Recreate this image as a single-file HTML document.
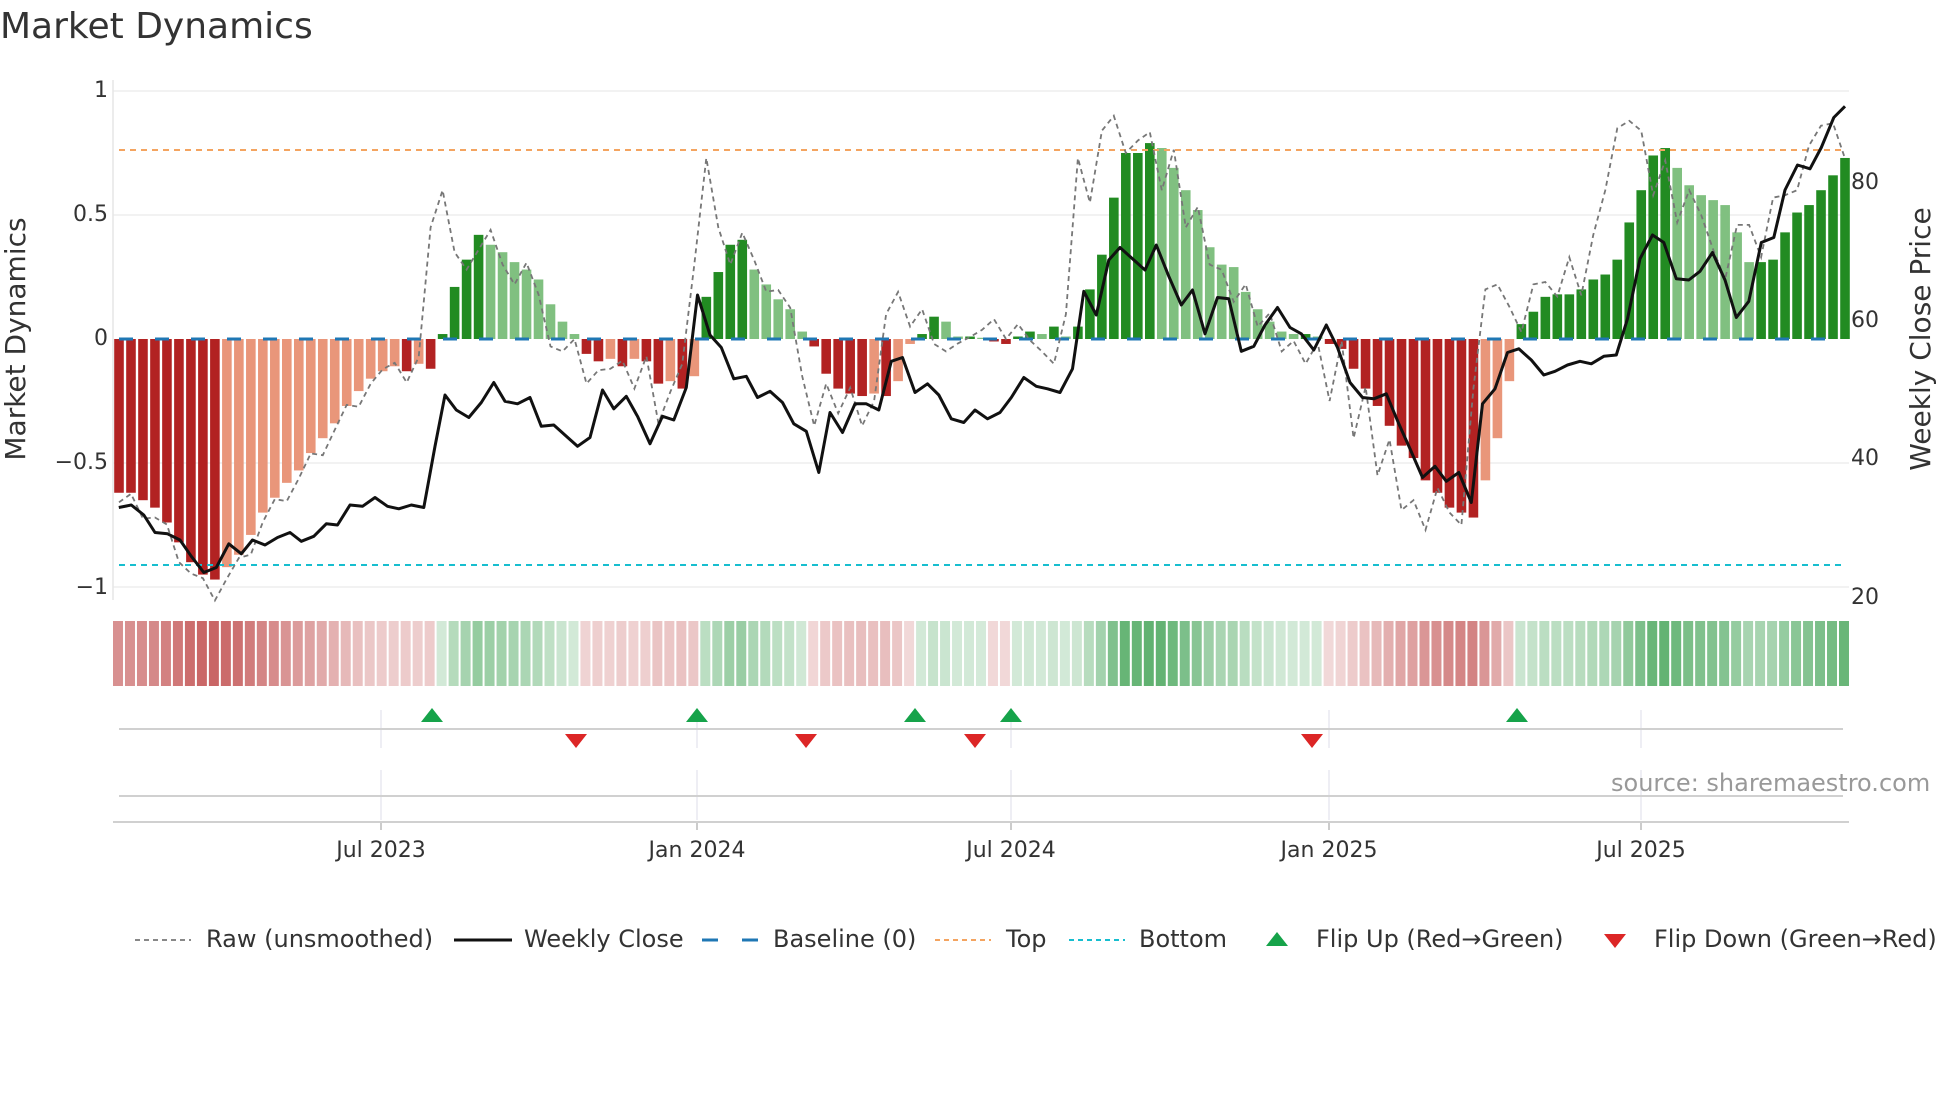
<!DOCTYPE html>
<html><head><meta charset="utf-8">
<style>
html,body{margin:0;padding:0;background:#fff;}
body{width:1960px;height:1102px;overflow:hidden;position:relative;font-family:"DejaVu Sans","Liberation Sans",sans-serif;color:#333;}
.t{position:absolute;white-space:nowrap;}
</style></head><body>
<div class="t" style="left:0;top:6px;font-size:36px;color:#333;">Market Dynamics</div>
<svg id="s" width="1960" height="1102" style="position:absolute;left:0;top:0">
</svg>
<div class="t" style="left:92px;top:78px;font-size:22px;width:16px;text-align:right">1</div>
<div class="t" style="left:60px;top:202px;font-size:22px;width:48px;text-align:right">0.5</div>
<div class="t" style="left:60px;top:326px;font-size:22px;width:48px;text-align:right">0</div>
<div class="t" style="left:40px;top:450px;font-size:22px;width:68px;text-align:right">−0.5</div>
<div class="t" style="left:40px;top:575px;font-size:22px;width:68px;text-align:right">−1</div>
<div class="t" style="left:1851px;top:170px;font-size:22px">80</div>
<div class="t" style="left:1851px;top:308px;font-size:22px">60</div>
<div class="t" style="left:1851px;top:446px;font-size:22px">40</div>
<div class="t" style="left:1851px;top:585px;font-size:22px">20</div>
<div class="t" style="left:-134px;top:322px;font-size:28px;width:300px;height:34px;line-height:34px;text-align:center;transform:rotate(-90deg)">Market Dynamics</div>
<div class="t" style="left:1771px;top:322px;font-size:28px;width:300px;height:34px;line-height:34px;text-align:center;transform:rotate(-90deg)">Weekly Close Price</div>
<div class="t" style="left:1611px;top:769px;font-size:24px;color:#999">source: sharemaestro.com</div>
<div class="t" style="left:321px;top:838px;font-size:22px;width:120px;text-align:center">Jul 2023</div>
<div class="t" style="left:637px;top:838px;font-size:22px;width:120px;text-align:center">Jan 2024</div>
<div class="t" style="left:951px;top:838px;font-size:22px;width:120px;text-align:center">Jul 2024</div>
<div class="t" style="left:1269px;top:838px;font-size:22px;width:120px;text-align:center">Jan 2025</div>
<div class="t" style="left:1581px;top:838px;font-size:22px;width:120px;text-align:center">Jul 2025</div>
<div class="t" style="left:206px;top:925px;font-size:24px">Raw (unsmoothed)</div>
<div class="t" style="left:524px;top:925px;font-size:24px">Weekly Close</div>
<div class="t" style="left:773px;top:925px;font-size:24px">Baseline (0)</div>
<div class="t" style="left:1006px;top:925px;font-size:24px">Top</div>
<div class="t" style="left:1139px;top:925px;font-size:24px">Bottom</div>
<div class="t" style="left:1316px;top:925px;font-size:24px">Flip Up (Red→Green)</div>
<div class="t" style="left:1654px;top:925px;font-size:24px">Flip Down (Green→Red)</div>
<script>
var NS="http://www.w3.org/2000/svg",S=document.getElementById('s');
function el(t,a){var e=document.createElementNS(NS,t);for(var k in a)e.setAttribute(k,a[k]);S.appendChild(e);return e;}
var V=[-0.62,-0.62,-0.65,-0.68,-0.74,-0.82,-0.9,-0.95,-0.97,
-0.92,-0.87,-0.79,-0.7,-0.64,-0.58,-0.53,-0.46,-0.4,-0.34,-0.27,-0.21,-0.16,-0.13,-0.11,
-0.13,-0.1,-0.12,
0.02,0.21,0.32,0.42,0.38,0.35,0.31,0.28,0.24,0.14,0.07,0.02,
-0.06,-0.09,-0.08,-0.11,-0.08,-0.09,-0.18,-0.17,-0.2,-0.15,
0.17,0.27,0.38,0.4,0.28,0.22,0.16,0.12,0.03,
-0.03,-0.14,-0.2,-0.22,-0.23,-0.22,-0.23,-0.17,-0.02,
0.02,0.09,0.07,0.01,0.01,0.005,-0.01,-0.02,
0.01,0.03,0.02,0.05,0.01,0.05,0.2,0.34,0.57,0.75,0.75,0.79,0.77,0.69,0.6,0.52,0.37,0.3,0.29,0.19,0.12,0.07,0.03,0.02,0.02,0.01,
-0.02,-0.04,-0.12,-0.2,-0.27,-0.35,-0.43,-0.48,-0.57,-0.62,-0.68,-0.7,-0.72,-0.57,-0.4,-0.17,
0.06,0.11,0.17,0.18,0.18,0.2,0.24,0.26,0.32,0.47,0.6,0.74,0.77,0.69,0.62,0.58,0.56,0.54,0.43,0.31,0.31,0.32,0.43,0.51,0.54,0.6,0.66,0.73];
var n=V.length,x0=119,x1=1845,dx=(x1-x0)/(n-1);
function Y(v){return 339-v*248;}
[1,0.5,-0.5,-1].forEach(function(v){el('line',{x1:113,x2:1849,y1:Y(v),y2:Y(v),stroke:'#eeeeee','stroke-width':1.5});});
el('line',{x1:113,x2:113,y1:80,y2:600,stroke:'#e6e6e6','stroke-width':1.5});
for(var i=0;i<n;i++){var v=V[i],p=i?V[i-1]:0;var dark=(i==0)||(Math.abs(v)>=Math.abs(p)&&v*p>0)||(v*p<=0);
 var c=v<0?(dark?'#b22222':'#e9967a'):(dark?'#228b22':'#80c080');
 var y=Y(v),h=Math.abs(v)*248;el('rect',{x:x0+i*dx-4.8,y:v<0?339:y,width:9.6,height:Math.max(h,1),fill:c});
 var a=Math.min(1,Math.abs(v));var col;
 if(v<0){var t=0.2+0.65*a;col='rgba(190,70,70,'+t.toFixed(2)+')';}else{var t=0.22+0.75*a;col='rgba(60,160,80,'+t.toFixed(2)+')';}
 el('rect',{x:x0+i*dx-6,y:621,width:dx-2,height:65,fill:col});
}
el('line',{x1:119,x2:1845,y1:339,y2:339,stroke:'#1f77b4','stroke-width':3,'stroke-dasharray':'14 22'});
el('line',{x1:119,x2:1845,y1:150,y2:150,stroke:'#f4a460','stroke-width':2,'stroke-dasharray':'6 5'});
el('line',{x1:119,x2:1845,y1:565,y2:565,stroke:'#17becf','stroke-width':2,'stroke-dasharray':'6 5'});
var pk={29:0.45,30:0.6,31:0.35,32:0.28,33:0.36,34:0.44,35:0.3,36:0.22,38:0.18,39:-0.03,40:-0.05,42:-0.18,44:-0.12,46:-0.2,48:-0.34,50:-0.1,51:0.3,52:0.73,53:0.45,54:0.3,60:-0.15,61:-0.35,62:-0.18,63:-0.3,65:-0.35,66:-0.25,67:0.1,68:0.19,69:0.05,70:0.12,71:-0.02,72:-0.05,76:0.08,78:0.06,80:-0.05,81:-0.1,82:0.1,83:0.73,84:0.55,85:0.84,86:0.9,87:0.75,88:0.8,90:0.6,92:0.45,94:0.3,96:0.15,98:0.05,100:-0.05,102:-0.1,104:-0.25,106:-0.4,108:-0.55,110:-0.69,111:-0.65,112:-0.77,113:-0.6,114:-0.7,115:-0.75,116:-0.2,117:0.2,118:0.22,119:0.13,121:0.22,122:0.23,124:0.33,126:0.42,127:0.6,128:0.85,129:0.88,130:0.84,131:0.58,132:0.72,133:0.47,134:0.6,135:0.5,136:0.36,137:0.24,138:0.46,139:0.46,140:0.33,141:0.57,142:0.58,143:0.6,144:0.78,145:0.86,146:0.87};
var d='';for(var i=0;i<n;i++){var j=i>=23?i+3:i;var r=(j in pk)?pk[j]:(V[i]*1.05+0.04*Math.sin(i*2.3));if(i<23)r=V[i]*1.03+0.04*Math.sin(i*2.1)-0.02;d+=(i?'L':'M')+(x0+i*dx).toFixed(1)+' '+Y(r).toFixed(1);}
el('path',{d:d,fill:'none',stroke:'#777','stroke-width':1.8,'stroke-dasharray':'5 4'});
var P=[95,406,105,404,115,412,124,426,134,427,144,432,153,445,163,458,173,454,183,435,193,443,202,432,212,436,222,430,232,426,241,433,251,429,261,419,270,420,280,404,290,405,300,398,310,405,319,407,329,404,339,406,348,357,356,316,365,328,375,334,385,322,395,306,404,321,414,323,424,318,433,341,443,340,453,349,462,357,472,350,482,312,491,327,501,317,510,333,520,355,530,333,539,336,549,310,558,236,568,268,577,278,587,303,597,301,606,318,616,313,626,322,635,339,645,345,655,378,664,330,674,346,684,323,693,323,703,328,713,289,722,286,732,314,742,307,751,316,761,335,771,338,780,328,790,335,800,330,809,318,819,302,829,309,838,311,848,314,858,295,867,233,877,252,887,208,896,198,906,207,916,216,925,196,935,221,945,244,954,232,964,267,974,238,983,239,993,281,1003,277,1012,260,1022,246,1032,262,1041,267,1051,280,1061,260,1070,278,1080,306,1090,318,1099,319,1109,315,1119,339,1128,359,1138,382,1148,373,1157,385,1167,378,1177,402,1186,323,1196,311,1206,282,1215,279,1225,288,1235,300,1244,297,1254,292,1264,289,1273,291,1283,285,1293,284,1302,255,1312,207,1322,188,1331,194,1341,223,1351,224,1360,217,1370,202,1380,224,1389,254,1399,241,1409,194,1419,190,1428,152,1438,132,1448,135,1457,118,1467,94,1476,85];
d='';for(var i=0;i<P.length;i+=2)d+=(i?'L':'M')+(P[i]*1.25).toFixed(1)+' '+(P[i+1]*1.25).toFixed(1);
el('path',{d:d,fill:'none',stroke:'#111','stroke-width':3,'stroke-linejoin':'round'});
[381,697,1011,1329,1641].forEach(function(x){el('line',{x1:x,x2:x,y1:710,y2:748,stroke:'#e8e8f0','stroke-width':1.5});el('line',{x1:x,x2:x,y1:770,y2:820,stroke:'#e8e8f0','stroke-width':1.5});el('line',{x1:x,x2:x,y1:822,y2:830,stroke:'#bbb','stroke-width':1.5});});
el('line',{x1:119,x2:1843,y1:729,y2:729,stroke:'#d0d0d0','stroke-width':2});
el('line',{x1:119,x2:1843,y1:796,y2:796,stroke:'#d0d0d0','stroke-width':2});
el('line',{x1:113,x2:1849,y1:822,y2:822,stroke:'#d0d0d0','stroke-width':2});
function up(x,y){el('path',{d:'M'+(x-11)+' '+(y+7)+'L'+x+' '+(y-7)+'L'+(x+11)+' '+(y+7)+'Z',fill:'#16a34a'});}
function dn(x,y){el('path',{d:'M'+(x-11)+' '+(y-7)+'L'+x+' '+(y+7)+'L'+(x+11)+' '+(y-7)+'Z',fill:'#dc2626'});}
[432,697,915,1011,1517].forEach(function(x){up(x,715);});
[576,806,975,1312].forEach(function(x){dn(x,741);});
el('line',{x1:135,x2:191,y1:940,y2:940,stroke:'#777','stroke-width':1.8,'stroke-dasharray':'5 4'});
el('line',{x1:454,x2:512,y1:940,y2:940,stroke:'#111','stroke-width':3});
el('line',{x1:702,x2:759,y1:940,y2:940,stroke:'#1f77b4','stroke-width':3,'stroke-dasharray':'16 24'});
el('line',{x1:935,x2:991,y1:940,y2:940,stroke:'#f4a460','stroke-width':2,'stroke-dasharray':'5 4'});
el('line',{x1:1069,x2:1125,y1:940,y2:940,stroke:'#17becf','stroke-width':2,'stroke-dasharray':'5 4'});
up(1277,939);dn(1615,941);
</script>
</body></html>
